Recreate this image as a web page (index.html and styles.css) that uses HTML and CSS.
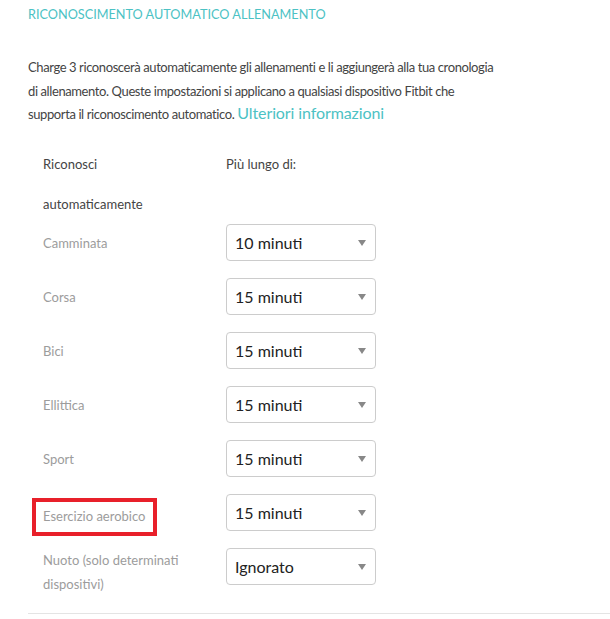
FILE: index.html
```html
<!DOCTYPE html>
<html lang="it">
<head>
  <meta charset="UTF-8" />
  <meta name="viewport" content="width=device-width, initial-scale=1" />
  <title>Riconoscimento automatico allenamento</title>
  <link rel="stylesheet" href="styles.css">
</head>
<body>
  <div class="section">
    <h2 class="section-title">RICONOSCIMENTO AUTOMATICO ALLENAMENTO</h2>

    <p class="intro">
      Charge 3 riconoscerà automaticamente gli allenamenti e li aggiungerà alla tua cronologia
      di allenamento. Queste impostazioni si applicano a qualsiasi dispositivo Fitbit che
      supporta il riconoscimento automatico. <a href="#" class="more-link">Ulteriori informazioni</a>
    </p>

    <!-- Tabella durata minima per tipo di esercizio -->
    <div class="auto-table">
      <div class="head-cell">Riconosci<br>automaticamente</div>
      <div class="head-cell">Più lungo di:</div>

      <div class="label-cell">Camminata</div>
      <div class="select-cell">
        <div class="select-wrap">
          <select><option>10 minuti</option><option>15 minuti</option></select>
        </div>
      </div>

      <div class="label-cell">Corsa</div>
      <div class="select-cell">
        <div class="select-wrap">
          <select><option>15 minuti</option></select>
        </div>
      </div>

      <div class="label-cell">Bici</div>
      <div class="select-cell">
        <div class="select-wrap">
          <select><option>15 minuti</option></select>
        </div>
      </div>

      <div class="label-cell">Ellittica</div>
      <div class="select-cell">
        <div class="select-wrap">
          <select><option>15 minuti</option></select>
        </div>
      </div>

      <div class="label-cell">Sport</div>
      <div class="select-cell">
        <div class="select-wrap">
          <select><option>15 minuti</option></select>
        </div>
      </div>

      <div class="label-cell">
        <span class="highlight">Esercizio aerobico</span>
      </div>
      <div class="select-cell">
        <div class="select-wrap">
          <select><option>15 minuti</option></select>
        </div>
      </div>

      <div class="label-cell">Nuoto (solo determinati<br>dispositivi)</div>
      <div class="select-cell">
        <div class="select-wrap">
          <select><option>Ignorato</option></select>
        </div>
      </div>
    </div>
  </div>
</body>
</html>
```

FILE: styles.css
```css
/* ===== Generale ===== */
body {
  margin: 0;
  background-color: #fff;
  font-family: Lato, "Liberation Sans", sans-serif;
  color: #444;
}
.section {
  padding: 0 0 0 28px;
}
.section-title {
  margin: 0;
  padding-top: 7px;
  font-size: 12.7px;
  font-weight: normal;
  line-height: 14px;
  color: #4cc2c4;
}

/* ===== Testo introduttivo ===== */
.intro {
  max-width: 468px;
  margin: 35px 0 0;
  font-size: 13px;
  letter-spacing: -0.4px;
  line-height: 23.5px;
  color: #444;
}
.more-link {
  font-size: 16px;
  line-height: 1;
  letter-spacing: -0.1px;
  color: #4cc2c4;
  text-decoration: none;
}

/* ===== Tabella ===== */
.auto-table {
  display: grid;
  grid-template-columns: 183px 150px;
  margin-top: 17px;
  padding-left: 15px;
  padding-bottom: 9px;
  border-bottom: 1px solid #e4e4e4;
}
.head-cell {
  font-size: 13px;
  line-height: 40px;
  color: #444;
  margin-bottom: -8px;
}
.label-cell {
  align-self: center;
  padding: 8px 0;
  font-size: 13px;
  line-height: 24px;
  color: #9c9c9c;
}
.select-cell {
  align-self: start;
  padding: 8px 0 9px;
}
.select-wrap {
  position: relative;
}
.select-wrap select {
  appearance: none;
  -webkit-appearance: none;
  width: 150px;
  height: 37px;
  padding: 0 0 0 8px;
  border: 1px solid #ccc;
  border-radius: 4px;
  background-color: #fff;
  font-family: inherit;
  font-size: 16px;
  color: #222;
}
/* freccia del menu */
.select-wrap::after {
  content: "";
  position: absolute;
  top: 16px;
  right: 10px;
  border-left: 4px solid transparent;
  border-right: 4px solid transparent;
  border-top: 6px solid #888;
  pointer-events: none;
}

/* riquadro rosso di evidenziazione */
.highlight {
  display: inline-block;
  margin: 4px 0 -4px -11px;
  padding: 2px 8px 4px 7px;
  border: 4px solid #e8202a;
}
```
